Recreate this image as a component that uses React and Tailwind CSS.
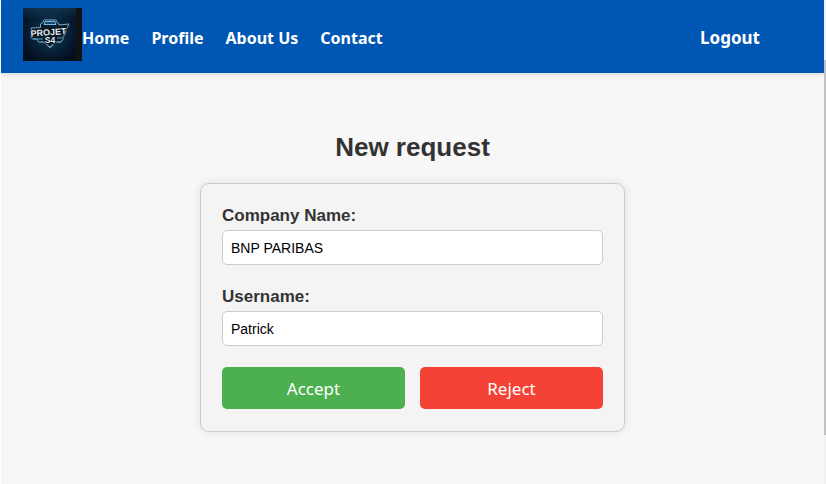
import React from "react";

const links = ["Home", "Profile", "About Us", "Contact"];

function Logo() {
  return (
    <svg viewBox="0 0 59 53" className="h-[53px] w-[59px] shrink-0" role="img" aria-label="Projet S4">
      <defs>
        <radialGradient id="glow" cx="27" cy="25" r="32" gradientUnits="userSpaceOnUse">
          <stop offset="0" stopColor="#13415f" />
          <stop offset="0.55" stopColor="#08223a" />
          <stop offset="1" stopColor="#040d1b" />
        </radialGradient>
        <linearGradient id="beam" x1="0" y1="0" x2="0" y2="1">
          <stop offset="0" stopColor="#1d5f86" stopOpacity="0.4" />
          <stop offset="1" stopColor="#1d5f86" stopOpacity="0" />
        </linearGradient>
      </defs>
      <rect width="59" height="53" fill="#111312" />
      <rect width="53" height="53" fill="url(#glow)" />
      <rect width="53" height="12" fill="url(#beam)" />
      <path
        d="M17.500 19.500v-3.500l2-1 1.500-3h12l1.500 3 1.500 1v1l10-1-3 6-1 5-2 1.500v3l-2 2.500h-4l-4 2-3 3.500-3.500-3.500-3-2h-5l-1.500-3H9.500l-2-2 1.500-2-1-7z"
        fill="#0a1b2c"
        stroke="#7fa3bb"
        strokeWidth="1"
        strokeLinejoin="round"
      />
      <path d="M22 13.500h10l1 3H21z" fill="#15486f" stroke="#6cb9e3" strokeWidth="1" />
      <path d="M10 31h10M34 30h5M17.500 34h4M34 34h4" fill="none" stroke="#4b9fce" strokeWidth="1.200" />
      <path d="M23 37l4 1.500 4-1.500-4 3z" fill="#78a7c3" />
      <g
        fontFamily="'Liberation Sans', Arial, sans-serif"
        fontWeight="700"
        textAnchor="middle"
        fill="#e3eaee"
        stroke="#071321"
        strokeWidth="1.6"
        paintOrder="stroke"
      >
        <text x="25.500" y="27.500" fontSize="9" transform="rotate(-4 25 25)">PROJET</text>
        <text x="27" y="35" fontSize="8.500">S4</text>
      </g>
    </svg>
  );
}

function Field({ id, label, value }) {
  return (
    <div className="flex flex-col gap-1">
      <label htmlFor={id} className="text-[17px] leading-[21px] font-bold text-[#333]">
        {label}
      </label>
      <input
        id={id}
        type="text"
        defaultValue={value}
        className="h-[35px] w-full rounded-[5px] border border-[#ccc] bg-white px-2 text-sm text-black"
      />
    </div>
  );
}

export default function App() {
  return (
    <div className="flex min-h-screen border-l border-white bg-[#f7f7f7] font-['Liberation_Sans',Arial,sans-serif]">
      <div className="flex min-w-0 flex-1 flex-col">
        <header className="flex h-[73px] items-center bg-[#0056b3] pt-1 pr-16 pb-2 pl-[22px] font-['Noto_Sans',sans-serif] font-bold text-white shadow-[0_2px_4px_rgba(0,0,0,0.1)]">
          <Logo />
          <nav className="flex flex-1 items-center gap-[22px] pt-1.5 text-base">
            {links.map((link) => (
              <a key={link} href="#">
                {link}
              </a>
            ))}
          </nav>
          <a href="#" className="pt-1.5 text-[17px]">
            Logout
          </a>
        </header>

        <main className="flex flex-col items-center px-4 pt-[58px] pb-12">
          <h1 className="text-[26px] leading-8 font-bold text-[#333]">New request</h1>
          <form
            className="mt-5 flex w-full max-w-[425px] flex-col gap-[21px] rounded-[9px] border border-[#ccc] bg-[#f4f4f4] px-[21px] pt-[21px] pb-[22px] shadow-[0_0_10px_rgba(0,0,0,0.1)]"
            onSubmit={(e) => e.preventDefault()}
          >
            <Field id="company" label="Company Name:" value="BNP PARIBAS" />
            <Field id="username" label="Username:" value="Patrick" />
            <div className="grid grid-cols-2 gap-[15px] font-['Noto_Sans',sans-serif] text-[17px] text-white">
              <button type="submit" className="h-[42px] rounded-[5px] bg-[#4caf50] pt-0.5">
                Accept
              </button>
              <button type="button" className="h-[42px] rounded-[5px] bg-[#f44336] pt-0.5">
                Reject
              </button>
            </div>
          </form>
        </main>
      </div>

      <div aria-hidden="true" className="flex w-0.5 flex-col bg-[#f1f1f1] pt-[60px]">
        <div className="h-[375px] bg-[#c1c1c1]" />
      </div>
    </div>
  );
}
